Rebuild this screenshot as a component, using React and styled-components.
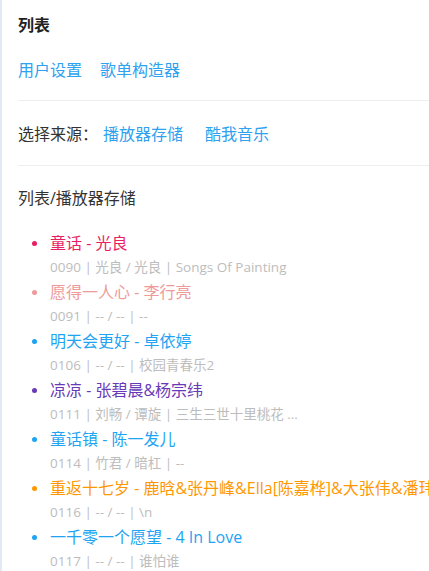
import React from 'react';
import styled, { createGlobalStyle } from 'styled-components';

const GlobalStyle = createGlobalStyle`
  html, body {
    margin: 0;
    padding: 0;
    background: #fff;
    overflow: hidden;
  }
  body {
    font-family: "Open Sans", "Noto Sans CJK SC", sans-serif;
    color: #333;
  }
`;

const Panel = styled.div`
  min-height: 571px;
  width: 600px;
  border-left: 2px solid #e1eaf3;
  padding: 12px 0 0 16px;
  box-sizing: border-box;
`;

const Title = styled.h3`
  margin: 0;
  font-size: 16px;
  line-height: 26px;
  font-weight: bold;
  color: #222;
`;

const Section = styled.div`
  display: flex;
  align-items: center;
  gap: ${(p) => p.gap || 18}px;
  padding: ${(p) => p.pad || '20px 0'};
  border-bottom: ${(p) => (p.divider ? '1px solid #eeeeee' : 'none')};
  font-size: 16px;
  line-height: 24px;
  white-space: nowrap;
`;

const Label = styled.span`
  color: #333;
  margin-right: -17px;
`;

const Link = styled.a`
  color: #2ea1ef;
  text-decoration: none;
  cursor: pointer;
`;

const Heading = styled.div`
  font-size: 16px;
  line-height: 24px;
  color: #333;
  padding: 20px 0 21px;
`;

const SongList = styled.ul`
  list-style: none;
  margin: 0;
  padding: 0 0 0 14px;
`;

const Song = styled.li`
  display: flex;
  align-items: flex-start;
  white-space: nowrap;
`;

const Dot = styled.span`
  flex: none;
  width: 5px;
  height: 5px;
  border-radius: 50%;
  background: ${(p) => p.color};
  margin: 10px 13px 0 0;
`;

const SongBody = styled.div`
  display: flex;
  flex-direction: column;
`;

const SongName = styled.div`
  font-size: 16px;
  line-height: 24px;
  color: ${(p) => p.color};
`;

const SongMeta = styled.div`
  font-size: 13.5px;
  line-height: 25px;
  color: #bdbdbd;
`;

const songs = [
  { name: '童话 - 光良', meta: '0090 | 光良 / 光良 | Songs Of Painting', color: '#e91e63' },
  { name: '愿得一人心 - 李行亮', meta: '0091 | -- / -- | --', color: '#ef9a9a' },
  { name: '明天会更好 - 卓依婷', meta: '0106 | -- / -- | 校园青春乐2', color: '#1ea4f2' },
  { name: '凉凉 - 张碧晨&杨宗纬', meta: '0111 | 刘畅 / 谭旋 | 三生三世十里桃花 ...', color: '#673ab7' },
  { name: '童话镇 - 陈一发儿', meta: '0114 | 竹君 / 暗杠 | --', color: '#1ea4f2' },
  { name: '重返十七岁 - 鹿晗&张丹峰&Ella[陈嘉桦]&大张伟&潘玮柏', meta: '0116 | -- / -- | \\n', color: '#ff9800' },
  { name: '一千零一个愿望 - 4 In Love', meta: '0117 | -- / -- | 谁怕谁', color: '#1ea4f2' },
];

export default function App() {
  return (
    <>
      <GlobalStyle />
      <Panel>
        <Title>列表</Title>
        <Section divider pad="20px 0 18px">
          <Link>用户设置</Link>
          <Link>歌单构造器</Link>
        </Section>
        <Section divider gap={22} pad="21px 0 19px">
          <Label>选择来源：</Label>
          <Link>播放器存储</Link>
          <Link>酷我音乐</Link>
        </Section>
        <Heading>列表/播放器存储</Heading>
        <SongList>
          {songs.map((s) => (
            <Song key={s.meta}>
              <Dot color={s.color} />
              <SongBody>
                <SongName color={s.color}>{s.name}</SongName>
                <SongMeta>{s.meta}</SongMeta>
              </SongBody>
            </Song>
          ))}
        </SongList>
      </Panel>
    </>
  );
}
